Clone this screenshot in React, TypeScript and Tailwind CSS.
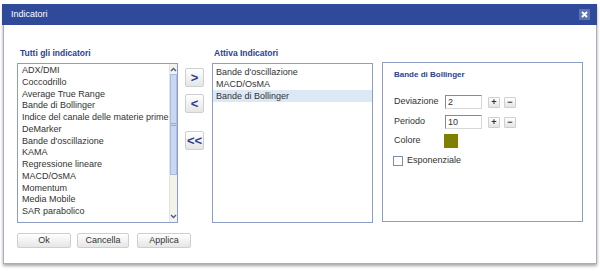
const allIndicators = [
  "ADX/DMI",
  "Coccodrillo",
  "Average True Range",
  "Bande di Bollinger",
  "Indice del canale delle materie prime",
  "DeMarker",
  "Bande d'oscillazione",
  "KAMA",
  "Regressione lineare",
  "MACD/OsMA",
  "Momentum",
  "Media Mobile",
  "SAR parabolico",
];

const active = ["Bande d'oscillazione", "MACD/OsMA", "Bande di Bollinger"];

function ArrowButton({ label }: { label: string }) {
  return (
    <div className="w-[19px] h-[19px] rounded-[2px] border border-[#cfcfcf] bg-gradient-to-b from-white to-[#e6e6e6] flex items-center justify-center text-[13px] font-bold leading-none text-[#2b3f8c]">
      {label}
    </div>
  );
}

function SmallButton({ label }: { label: string }) {
  return (
    <div className="w-[12px] h-[11px] rounded-[1px] border border-[#cfcfcf] bg-gradient-to-b from-white to-[#e4e4e4] flex items-center justify-center text-[9px] font-bold leading-none text-[#333]">
      {label}
    </div>
  );
}

function Chevron({ up }: { up?: boolean }) {
  return (
    <svg width="7" height="5" viewBox="0 0 7 5">
      <path
        d={up ? "M1 4 L3.5 1.5 L6 4" : "M1 1 L3.5 3.5 L6 1"}
        fill="none"
        stroke="#4a5a8a"
        strokeWidth="1.4"
      />
    </svg>
  );
}

export default function App() {
  return (
    <div
      className="w-[600px] h-[271px] bg-white pt-[4px] pl-[3px] text-[9px] text-[#333]"
      style={{ fontFamily: '"Liberation Sans", Arial, sans-serif' }}
    >
      <div className="w-[594px] shadow-[0_2px_3px_rgba(0,0,0,0.35)]">
        {/* title bar */}
        <div className="h-[21px] bg-[#2f4a9b] flex items-center justify-between pl-[9px] pr-[7px] -ml-[1px]">
          <span className="text-white text-[9px]">Indicatori</span>
          <div className="w-[11px] h-[11px] bg-[#5d72b6] flex items-center justify-center">
            <svg width="7" height="7" viewBox="0 0 7 7">
              <path d="M1 1 L6 6 M6 1 L1 6" stroke="white" strokeWidth="1.8" />
            </svg>
          </div>
        </div>

        {/* body */}
        <div className="border-l border-r border-b border-[#a7adc4] bg-white pl-[13px] pt-[22px] pb-[15px]">
          <div className="flex items-start h-[175px]">
            {/* all indicators */}
            <div className="w-[161px]">
              <div className="h-[16px] pl-[3px] text-[8.5px] font-bold leading-[12px] text-[#2c3f8f]">
                Tutti gli indicatori
              </div>
              <div className="h-[160px] border border-[#8e9cc8] flex">
                <div className="flex-1 pl-[4px] pt-[1px]">
                  {allIndicators.map((name) => (
                    <div key={name} className="h-[11.75px] leading-[11.75px] whitespace-nowrap">
                      {name}
                    </div>
                  ))}
                </div>
                <div className="w-[13px] bg-[#f3f3ec] flex flex-col border-l border-[#e4e4dc]">
                  <div className="h-[10px] flex items-center justify-center">
                    <Chevron up />
                  </div>
                  <div className="h-[101px] bg-[#c9d8f2] border border-[#a9bde2] flex items-center justify-center">
                    <div className="w-[5px] h-[3px] border-t border-b border-[#93a8d4]" />
                  </div>
                  <div className="flex-1" />
                  <div className="h-[11px] flex items-center justify-center">
                    <Chevron />
                  </div>
                </div>
              </div>
            </div>

            {/* move buttons */}
            <div className="ml-[7px] mt-[21px] flex flex-col">
              <ArrowButton label=">" />
              <div className="mt-[7px]">
                <ArrowButton label="<" />
              </div>
              <div className="mt-[18px]">
                <ArrowButton label="<<" />
              </div>
            </div>

            {/* active indicators */}
            <div className="ml-[8px] w-[161px]">
              <div className="h-[16px] pl-[2px] text-[8.5px] font-bold leading-[12px] text-[#2c3f8f]">
                Attiva Indicatori
              </div>
              <div className="h-[160px] border border-[#8e9cc8] pt-[2px]">
                {active.map((name, i) => (
                  <div
                    key={name}
                    className={`h-[12px] leading-[12px] pl-[3px] ${i === 2 ? "bg-[#dde8f6]" : ""}`}
                  >
                    {name}
                  </div>
                ))}
              </div>
            </div>

            {/* settings panel */}
            <div className="ml-[9px] mt-[15px] w-[201px] h-[160px] border border-[#8e9cc8] pl-[11px] pt-[7px]">
              <div className="h-[10px] text-[8px] font-bold leading-[10px] text-[#2c3f8f]">
                Bande di Bollinger
              </div>
              <div className="mt-[15px] flex items-center h-[14px]">
                <span className="w-[51px]">Deviazione</span>
                <div className="w-[37px] h-[14px] border border-t-[#8a8a8a] border-l-[#8a8a8a] border-r-[#d8d8d8] border-b-[#d8d8d8] pl-[2px] leading-[12px]">
                  2
                </div>
                <div className="ml-[6px]">
                  <SmallButton label="+" />
                </div>
                <div className="ml-[4px]">
                  <SmallButton label="−" />
                </div>
              </div>
              <div className="mt-[6px] flex items-center h-[14px]">
                <span className="w-[51px]">Periodo</span>
                <div className="w-[37px] h-[14px] border border-t-[#8a8a8a] border-l-[#8a8a8a] border-r-[#d8d8d8] border-b-[#d8d8d8] pl-[2px] leading-[12px]">
                  10
                </div>
                <div className="ml-[6px]">
                  <SmallButton label="+" />
                </div>
                <div className="ml-[4px]">
                  <SmallButton label="−" />
                </div>
              </div>
              <div className="mt-[5px] flex items-center h-[14px]">
                <span className="w-[50px]">Colore</span>
                <div className="w-[14px] h-[14px] bg-[#808000]" />
              </div>
              <div className="mt-[8px] flex items-center h-[10px] -ml-[1px]">
                <div className="w-[10px] h-[10px] border border-[#7f8ca8] bg-white" />
                <span className="ml-[4px]">Esponenziale</span>
              </div>
            </div>
          </div>

          {/* bottom buttons */}
          <div className="mt-[11px] flex h-[15px]">
            <div className="w-[54px] h-[15px] rounded-[2px] border border-[#cfcfcf] bg-gradient-to-b from-white to-[#e6e6e6] flex items-center justify-center">
              Ok
            </div>
            <div className="ml-[6px] w-[52px] h-[15px] rounded-[2px] border border-[#cfcfcf] bg-gradient-to-b from-white to-[#e6e6e6] flex items-center justify-center">
              Cancella
            </div>
            <div className="ml-[8px] w-[54px] h-[15px] rounded-[2px] border border-[#cfcfcf] bg-gradient-to-b from-white to-[#e6e6e6] flex items-center justify-center">
              Applica
            </div>
          </div>
        </div>
      </div>
    </div>
  );
}
